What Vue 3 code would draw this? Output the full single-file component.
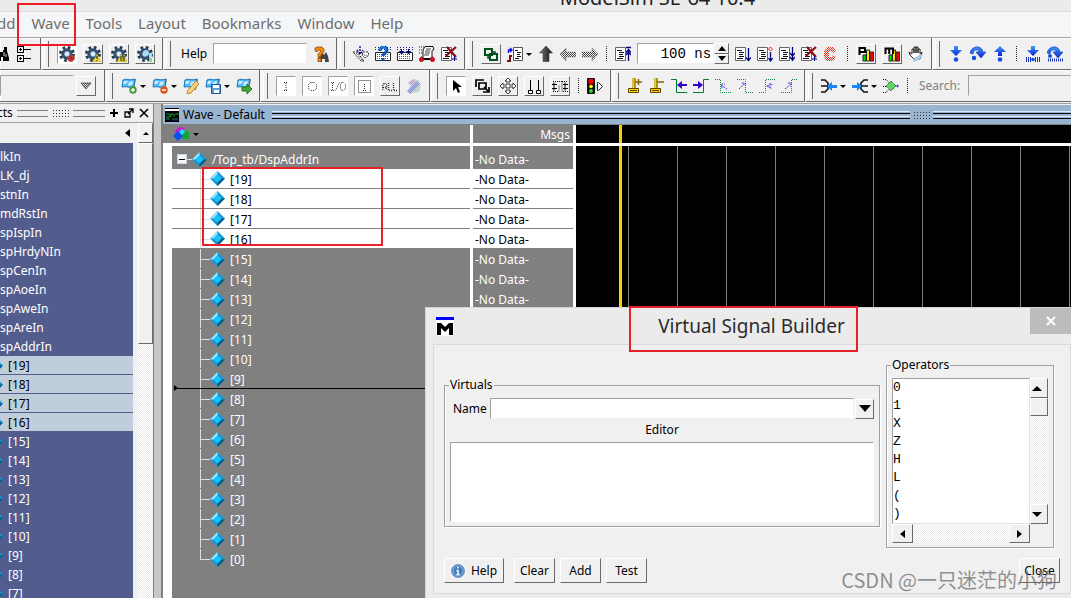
<script setup>
const menus = ['dd', 'Wave', 'Tools', 'Layout', 'Bookmarks', 'Window', 'Help']

const fileTools = [
  { icon: 'binoc', label: 'Find' },
  { icon: 'expand', label: 'Expand' },
]
const simTools = [
  { icon: 'gear-red', label: 'Break', kind: 'down' },
  { icon: 'gear-warn', label: 'Warnings', kind: 'up' },
  { icon: 'gear-warn2', label: 'All warnings', kind: 'up' },
  { icon: 'gear-green', label: 'Status', kind: 'up' },
]
const compileTools = [
  { icon: 'compile', label: 'Compile' },
  { icon: 'compile-q', label: 'Compile out of date' },
  { icon: 'compile-all', label: 'Compile all' },
  { icon: 'simulate', label: 'Simulate' },
  { icon: 'doc-break', label: 'End simulation' },
]
const envTools = [
  { icon: 'env', label: 'Environment', kind: 'up' },
  { icon: 'doc-env', label: 'Context', drop: true },
  { icon: 'up', label: 'Up' },
  { icon: 'left', label: 'Back' },
  { icon: 'right', label: 'Forward' },
  { sep: true },
  { icon: 'restart', label: 'Restart' },
]
const runTools = [
  { icon: 'run', label: 'Run' },
  { icon: 'run-step', label: 'Continue run' },
  { icon: 'run-all', label: 'Run all' },
  { icon: 'doc-break', label: 'Break' },
  { icon: 'stop', label: 'Stop' },
  { sep: true },
  { icon: 'prof', label: 'Performance profile', kind: 'up' },
  { icon: 'mem', label: 'Memory profile', kind: 'up' },
  { icon: 'hand', label: 'Edit breakpoints' },
]
const stepTools = [
  { icon: 'step-in', label: 'Step into' },
  { icon: 'step-over', label: 'Step over' },
  { icon: 'step-out', label: 'Step out' },
  { sep: true },
  { icon: 'step-in2', label: 'Step into instance' },
  { icon: 'step-over2', label: 'Step over instance' },
]
const bookTools = [
  { icon: 'bm-add', label: 'Add bookmark', drop: true },
  { icon: 'bm-del', label: 'Delete bookmark', drop: true },
  { icon: 'bm-edit', label: 'Manage bookmarks' },
  { icon: 'bm-save', label: 'Save bookmarks', drop: true },
  { icon: 'bm-go', label: 'Jump to bookmark' },
]
const filterTools = [
  { icon: 'f-in', label: 'Inputs', kind: 'down' },
  { icon: 'f-out', label: 'Outputs', kind: 'down' },
  { icon: 'f-io', label: 'Inouts', kind: 'down' },
  { icon: 'f-int', label: 'Internals', kind: 'down' },
  { icon: 'f-all', label: 'All', kind: 'up' },
  { icon: 'brush', label: 'Color' },
]
const modeTools = [
  { icon: 'cursor', label: 'Select mode', kind: 'down' },
  { icon: 'zoom-mode', label: 'Zoom mode', kind: 'up' },
  { icon: 'pan', label: 'Pan mode', kind: 'up' },
  { icon: 'two-cursor', label: 'Two cursor mode', kind: 'up' },
  { icon: 'edit-mode', label: 'Edit mode', kind: 'up' },
  { sep: true },
  { icon: 'light', label: 'Stop drawing' },
]
const cursorTools = [
  { icon: 'c-add', label: 'Insert cursor' },
  { icon: 'c-del', label: 'Delete cursor' },
  { icon: 't-prev', label: 'Previous transition' },
  { icon: 't-next', label: 'Next transition' },
  { icon: 'fall-prev', label: 'Previous falling edge' },
  { icon: 'fall-next', label: 'Next falling edge' },
  { icon: 'rise-prev', label: 'Previous rising edge' },
  { icon: 'rise-next', label: 'Next rising edge' },
]
const traceTools = [
  { icon: 'drivers', label: 'Expand to drivers', drop: true },
  { icon: 'readers', label: 'Expand to readers', drop: true },
  { icon: 'both', label: 'Expand both' },
  { sep: true },
]

const objects = ['lkIn', 'LK_dj', 'stnIn', 'mdRstIn', 'spIspIn', 'spHrdyNIn', 'spCenIn', 'spAoeIn', 'spAweIn', 'spAreIn', 'spAddrIn']
const bits = Array.from({ length: 20 }, (_, i) => 19 - i)
const operators = ['0', '1', 'X', 'Z', 'H', 'L', '(', ')']

const bottomRow = [
  { name: 'bookmarks', items: bookTools },
  { name: 'filters', items: filterTools },
  { name: 'modes', items: modeTools },
  { name: 'cursors', items: cursorTools },
]
</script>

<template>
  <svg class="defs" aria-hidden="true">
    <symbol id="binoc" viewBox="0 0 16 16"><path d="M2 1h3v3h2v2h3V4h1V1h3v4l2 7v3h-6v-4H8v4H2v-5z" fill="#000" /><path d="M11 6v4M13 8v3M4 6v5" stroke="#ddd" /></symbol>
    <symbol id="expand" viewBox="0 0 16 16"><g fill="none" stroke="#000" shape-rendering="crispEdges"><path d="M2.500 .5h6v6h-6zM2.500 9.500h6v6h-6zM4 3.500h3M5.500 2v3M4 12.500h3M5.500 11v3M9 3.500h7M9 12.500h7" /></g></symbol>
    <symbol id="gear" viewBox="0 0 16 16"><circle cx="8" cy="8" r="6.500" fill="none" stroke="#263a50" stroke-width="3" stroke-dasharray="2.600 2.500" /><circle cx="8" cy="8" r="4.200" fill="#a9d0e8" stroke="#34506f" stroke-width="3" /><circle cx="8" cy="8" r="2" fill="#e2edf5" /></symbol>
    <symbol id="gear-red" viewBox="0 0 16 16"><use href="#gear" /><path d="M9 10l2-1 2 1 2-2 1 5-3 3-4-1z" fill="#c33a3a" /><path d="M10 12h5M12 10v4" stroke="#8f2a2a" /></symbol>
    <symbol id="gear-warn" viewBox="0 0 16 16"><use href="#gear" /><path d="M12 8l4 8H8z" fill="#f2e23a" stroke="#a79a22" stroke-width=".6" /><path d="M12 10v3M12 14v1" stroke="#000" /></symbol>
    <symbol id="gear-warn2" viewBox="0 0 16 16"><use href="#gear" /><path d="M10 8l3 8H6zM13 8l3 8h-5z" fill="#f2e23a" stroke="#a79a22" stroke-width=".6" /><path d="M10 10v5M13 10v5" stroke="#111" /></symbol>
    <symbol id="gear-green" viewBox="0 0 16 16"><use href="#gear" /><circle cx="9" cy="7" r="3" fill="#a7d8f5" /><path d="M12 7h3v4h-3z" fill="#9bdcf0" /><path d="M12 12h3v4h-3z" fill="#7fe08a" /></symbol>
    <symbol id="find-q" viewBox="0 0 16 16"><path d="M6 8l3-2 2 3 2-3 2 4 1 6h-4v-3H9v3H5z" fill="#444" /><path d="M2 5V2l2-1h5l2 2v3L8 9v2H5V8l3-3-2-1-2 2zM5 12h3v4H5z" fill="#f28b12" stroke="#7b4505" stroke-width=".7" /></symbol>
    <symbol id="compile" viewBox="0 0 16 16"><path d="M0 6h4l7 9H8zM10 6h5l1 3-4 3-3-3z" fill="#fff" stroke="#222" stroke-dasharray="2 1" /><path d="M3 7l7 8M9 8l5 2" stroke="#222" stroke-dasharray="1 1" /><path d="M7 0v8M4 4l3 4 3-4" stroke="#000080" stroke-width="1.300" fill="none" stroke-dasharray="2 1" /></symbol>
    <symbol id="stack" viewBox="0 0 16 16"><path d="M.5 6.500h15v8H.5z" fill="#fff" stroke="#222" /><path d="M2 8.500h12M2 10.500h12M2 12.500h12" stroke="#555" stroke-dasharray="1 1" /><path d="M0 1.500h16M0 3.500h16" stroke="#1b1b8b" stroke-dasharray="1 2" /></symbol>
    <symbol id="compile-q" viewBox="0 0 16 16"><use href="#stack" /><path d="M5 5c0-5 7-5 7-1 0 3-4 3-4 6M8 12v2.500" fill="none" stroke="#0756bd" stroke-width="3" /><path d="M5 4c0-4 6-4 6-1" fill="none" stroke="#33a7ff" /></symbol>
    <symbol id="compile-all" viewBox="0 0 16 16"><use href="#stack" /><path d="M4.500 3v3M11.500 3v3M2.500 5.500h4l-2 2.500zM9.500 5.500h4l-2 2.500z" stroke="#000080" fill="#000080" /></symbol>
    <symbol id="simulate" viewBox="0 0 16 16"><path d="M6 .5h8l1 3-2 1v7l-2 1H4V4z" fill="#fff" stroke="#111" /><path d="M7 3h5M6 5h5M6 7h5M5 9h5" stroke="#444" /><path d="M0 1h5M0 4h4M0 7h3" stroke="#1b1b8b" stroke-dasharray="1 1" /><path d="M3 13.500h10" stroke="#000" /><path d="M2.500 10.500l3 3-3 3-3-3zM13.500 10.500l3 3-3 3-3-3z" fill="#d3152d" stroke="#600" stroke-width=".5" /></symbol>
    <symbol id="page" viewBox="0 0 16 16"><path d="M.5 1.500h10v13H.5z" fill="#fff" stroke="#666" /><path d="M2 4.500h5M4 6.500h5M4 8.500h4M4 10.500h5M2 12.500h6" stroke="#111" /></symbol>
    <symbol id="doc-break" viewBox="0 0 16 16"><use href="#page" /><path d="M6 1l9 10M15 1L5 10" stroke="#8b0d14" stroke-width="2.200" /><path d="M13.500 10v5M11 13h5" stroke="#000080" /></symbol>
    <symbol id="env" viewBox="0 0 16 16"><path d="M2 3h7v6H2zM7 8h7v6H7z" fill="none" stroke="#00511c" stroke-width="2" /><path d="M9 6h3v2M5 9v3h2" fill="none" stroke="#00511c" stroke-width="1.500" /></symbol>
    <symbol id="doc-env" viewBox="0 0 16 16"><path d="M6.500 1.500h9v13h-9z" fill="#fff" stroke="#555" /><path d="M8 4.500h3M10 6.500h4M10 8.500h3M10 10.500h4M8 12.500h4" stroke="#111" /><path d="M1.500 7V4h3M3 2l2 2-2 2" fill="none" stroke="#0000ee" stroke-width="1.300" /><path d="M0 15h3v-5h2" fill="none" stroke="#7d1010" stroke-width="2" /></symbol>
    <linearGradient id="dark" x1="0" x2="1"><stop offset="0" stop-color="#777" /><stop offset="1" stop-color="#111" /></linearGradient>
    <symbol id="up" viewBox="0 0 16 16"><path d="M8 0l6.500 7H11v8.500H5V7H1.500z" fill="url(#dark)" stroke="#333" stroke-width=".5" /></symbol>
    <pattern id="dither" width="2" height="2" patternUnits="userSpaceOnUse"><path d="M0 0h1v1H0zM1 1h1v1H1z" fill="#444" /></pattern>
    <symbol id="left" viewBox="0 0 16 16"><path d="M0 8l6-6v4h10v5H6v4z" fill="url(#dither)" stroke="#666" stroke-width=".8" stroke-dasharray="1 1" /></symbol>
    <symbol id="right" viewBox="0 0 16 16"><path d="M16 8l-6-6v4H0v5h10v4z" fill="url(#dither)" stroke="#666" stroke-width=".8" stroke-dasharray="1 1" /></symbol>
    <symbol id="restart" viewBox="0 0 16 16"><use href="#page" /><path d="M13.500 3v12M11 1.500h5M11 6.500l2.500-3 2.500 3M11 9l2.500-3L16 9" stroke="#000080" stroke-width="1.300" fill="none" /></symbol>
    <symbol id="run" viewBox="0 0 16 16"><use href="#page" /><path d="M13.500 2v12M11 11.500l2.500 3 2.500-3" stroke="#000080" stroke-width="1.300" fill="none" /></symbol>
    <symbol id="run-step" viewBox="0 0 16 16"><use href="#page" /><path d="M13.500 6v9M11.500 12l2 3 2-3" stroke="#000080" stroke-width="1.300" fill="none" /><path d="M13.500 1l2 2-2 2-2-2z" fill="#fff" stroke="#e02020" /></symbol>
    <symbol id="run-all" viewBox="0 0 16 16"><use href="#page" /><path d="M13.500 1v14M11 7l2.500 3L16 7M11 11l2.500 3 2.500-3" stroke="#000080" stroke-width="1.300" fill="none" /></symbol>
    <pattern id="red-dither" width="2" height="2" patternUnits="userSpaceOnUse"><path d="M0 0h1v1H0zM1 1h1v1H1z" fill="#e0301a" /></pattern>
    <symbol id="stop" viewBox="0 0 16 16"><path d="M4 1h6l3 4-3 2-1-2H6v6h3l1-2 3 2-3 4H4l-3-4V5z" fill="url(#red-dither)" /></symbol>
    <symbol id="bars" viewBox="0 0 16 16"><path d="M5 9h3v6H5z" fill="#00e400" stroke="#222" /><path d="M8.500 4h3v11h-3z" fill="#ffe600" stroke="#222" /><path d="M12 6h3.500v9H12z" fill="#f00" stroke="#222" /></symbol>
    <symbol id="prof" viewBox="0 0 16 16"><use href="#bars" /><path d="M1.500 9V2H7v4H2" fill="none" stroke="#000" stroke-width="2" /></symbol>
    <symbol id="mem" viewBox="0 0 16 16"><use href="#bars" /><path d="M1.500 8V2.500H9V8M5.200 3v5" fill="none" stroke="#000" stroke-width="2" /></symbol>
    <symbol id="hand" viewBox="0 0 16 16"><path d="M6 13L2 9 1 6l3 2V3h2v4-6h2v6-6h2v6-4h2v5l2-2-2 7z" fill="#fff" stroke="#111" stroke-width=".9" /><path d="M5 13l6-4 4-1-3 5-6 3z" fill="#a3c7e9" /></symbol>
    <linearGradient id="sky" x1="0" x2="0" y1="0" y2="1"><stop offset="0" stop-color="#3d9cff" /><stop offset="1" stop-color="#0b24c8" /></linearGradient>
    <symbol id="step-in" viewBox="0 0 16 16"><path d="M6 0h4v4h4L8 10 2 4h4z" fill="url(#sky)" /><circle cx="8" cy="13.500" r="2.300" fill="#1450e0" /></symbol>
    <symbol id="step-over" viewBox="0 0 16 16"><path d="M0 7C2-1 12-1 13 6h3l-5 6-5-6h3C8 2 3 4 3 8z" fill="url(#sky)" stroke="#0a37b3" stroke-width=".6" /><circle cx="4" cy="12" r="2.200" fill="#1450e0" /></symbol>
    <symbol id="step-out" viewBox="0 0 16 16"><path d="M8 0l6 6h-4v4H6V6H2z" fill="url(#sky)" /><circle cx="8" cy="13.500" r="2.300" fill="#1450e0" /></symbol>
    <symbol id="step-in2" viewBox="0 0 16 16"><path d="M6 0h4v4h4L8 10 2 4h4z" fill="url(#sky)" /><path d="M1.500 11v5M3.500 11v5M5.500 11v5M10.500 11v5M12.500 11v5M14.500 11v5" stroke="#1a35c0" /><circle cx="8" cy="13.500" r="1.800" fill="#1450e0" /></symbol>
    <symbol id="step-over2" viewBox="0 0 16 16"><path d="M0 7C2-1 12-1 13 6h3l-5 6-5-6h3C8 2 3 4 3 8z" fill="url(#sky)" stroke="#0a37b3" stroke-width=".6" /><circle cx="3" cy="10" r="2" fill="#1450e0" /><path d="M1 14h15" stroke="#1a35c0" stroke-width="3" stroke-dasharray="1 1" /></symbol>
    <symbol id="flag" viewBox="0 0 16 16"><path d="M13 1h2l-2 11h-2z" fill="#b87a27" /><path d="M2 2c4-2 6 1 12-1l-1 8c-5 1-7-1-12 0z" fill="#55b9f5" stroke="#1677c5" /><path d="M3 3h4L5 6H2zM8 4l4-1-1 4-4 1z" fill="#c6edff" /></symbol>
    <symbol id="bm-add" viewBox="0 0 16 16"><use href="#flag" /><circle cx="12" cy="12" r="3.700" fill="#3f9a35" /><path d="M12 10v4M10 12h4" stroke="#fff" stroke-width="1.400" /></symbol>
    <symbol id="bm-del" viewBox="0 0 16 16"><use href="#flag" /><circle cx="12" cy="12" r="3.700" fill="#e35214" /><path d="M10 12h4" stroke="#fff" stroke-width="1.600" /></symbol>
    <symbol id="bm-edit" viewBox="0 0 16 16"><use href="#flag" /><path d="M13 3l3 3-8 9-4 1 1-4z" fill="#f6d383" stroke="#c9821c" /></symbol>
    <symbol id="bm-save" viewBox="0 0 16 16"><use href="#flag" /><path d="M6.500 6.500h9v9h-9z" fill="#5d9be0" stroke="#23569c" /><path d="M8 7h6v3H8zM9 12h5v3H9z" fill="#fff" /></symbol>
    <symbol id="bm-go" viewBox="0 0 16 16"><use href="#flag" /><path d="M6 9h5V6l5 5-5 5v-3H6z" fill="#49a63f" stroke="#26771f" /></symbol>
    <symbol id="f-in" viewBox="0 0 16 16"><path d="M6 4.500h3M8 5v7M6 12.500h4" stroke="#333" stroke-dasharray="1 1" /></symbol>
    <symbol id="f-out" viewBox="0 0 16 16"><path d="M6.500 4.500h4l2 2v4l-2 2h-4l-2-2v-4z" fill="none" stroke="#333" stroke-dasharray="1 1" /></symbol>
    <symbol id="f-io" viewBox="0 0 16 16"><path d="M1 4.500h3M2.500 5v7M1 12.500h3M5.500 12.500l4-8M11.500 4.500h2l2 2v4l-2 2h-2l-1-2v-4z" fill="none" stroke="#333" stroke-dasharray="1 1" /></symbol>
    <symbol id="f-int" viewBox="0 0 16 16"><path d="M2.500 2.500h12v12h-12zM8.500 6v6M7 12.500h4" fill="none" stroke="#222" stroke-dasharray="1 1" /></symbol>
    <symbol id="f-all" viewBox="0 0 16 16"><path d="M.5 12V7l2-2 2 2v5M1 9.500h4M6.500 5v7.500h4M11.500 5v7.500h4" fill="none" stroke="#333" stroke-dasharray="1 1" stroke-width="1.400" /></symbol>
    <symbol id="brush" viewBox="0 0 16 16"><path d="M2 5l4-4 5 1 4 5-2 7-4 1z" fill="#d5eadf" /><path d="M2 5l5-4 4 4-5 2z" fill="#dec4e8" /><path d="M1 13L11 3l3 3L4 16z" fill="#a4b5f3" /><path d="M2 5l5-4 6 1 2 5-2 7-9 2-3-3 4-6z" fill="url(#dither)" opacity=".25" /></symbol>
    <symbol id="cursor" viewBox="0 0 16 16"><path d="M5 2v11l3-3 2 5 2-1-2-5h4z" fill="#000" /></symbol>
    <symbol id="zoom-mode" viewBox="0 0 16 16"><path d="M2 9V2h8M5 5h7v6H5zM9 14h6V9M10 9l5 5" fill="none" stroke="#000" stroke-width="1.700" /></symbol>
    <symbol id="pan" viewBox="0 0 16 16"><path d="M8 0l3 3H9v4h4V5l3 3-3 3V9H9v4h2l-3 3-3-3h2V9H3v2L0 8l3-3v2h4V3H5z" fill="#fff" stroke="#222" stroke-width=".9" /></symbol>
    <symbol id="two-cursor" viewBox="0 0 16 16"><path d="M4.500 2v10M12.500 2v10" stroke="#000" /><path d="M2.500 12.500h4v3h-4zM10.500 12.500h4v3h-4z" fill="#fff" stroke="#000" /></symbol>
    <symbol id="edit-mode" viewBox="0 0 16 16"><path d="M1 3.500h9v10h6M10 3.500h6M1 13.500h6V7" fill="none" stroke="#111" stroke-dasharray="1 1" /><path d="M0 6.500h5M0 10.500h5M2 4.500v4M2 8.500v4M11 6.500h5M11 10.500h5M13 4.500v4M13 8.500v4" stroke="#000" /></symbol>
    <symbol id="light" viewBox="0 0 16 16"><rect width="8" height="16" rx="1" fill="#111" /><circle cx="4" cy="3.500" r="2.700" fill="#f00" /><circle cx="4" cy="8.500" r="1.800" fill="#ff0" /><circle cx="4" cy="13" r="1.900" fill="#29dd29" /><path d="M10.500 4.500v8h1l4-4-4-4z" fill="#fff" stroke="#222" /><path d="M9 7v4" stroke="#68cfe6" /></symbol>
    <symbol id="c-base" viewBox="0 0 16 16"><path d="M7 0v11" stroke="#5b4500" stroke-width="3" /><path d="M6.500 0v11" stroke="#ffd400" stroke-width="2" /><path d="M1.500 10.500h10v4h-10z" fill="#ffd400" stroke="#5b4500" /><path d="M3 12.500h7" stroke="#5b4500" /></symbol>
    <symbol id="c-add" viewBox="0 0 16 16"><use href="#c-base" /><path d="M8 4h7M11.500 1v6" stroke="#80640a" stroke-width="1.500" /></symbol>
    <symbol id="c-del" viewBox="0 0 16 16"><use href="#c-base" /><path d="M8 4h7" stroke="#80640a" stroke-width="1.500" /></symbol>
    <symbol id="t-prev" viewBox="0 0 16 16"><path d="M0 1.500h5.500v13H16" fill="none" stroke="#007a28" /><path d="M6 7l5-4v3h5v2h-5v3z" fill="#3300cc" /></symbol>
    <symbol id="t-next" viewBox="0 0 16 16"><path d="M0 14.500h10.500v-13H16" fill="none" stroke="#007a28" /><path d="M10 7L5 3v3H0v2h5v3z" fill="#3300cc" /></symbol>
    <symbol id="fall-prev" viewBox="0 0 16 16"><path d="M0 1.500h5.500v13H16" fill="none" stroke="#118841" stroke-dasharray="1 1" /><path d="M6 7l6 4M7 10V6h3" fill="none" stroke="#5330db" stroke-dasharray="2 1" /></symbol>
    <symbol id="fall-next" viewBox="0 0 16 16"><path d="M0 1.500h8.500v13H16" fill="none" stroke="#118841" stroke-dasharray="1 1" /><path d="M2 11l5-5M5 5h3v3" fill="none" stroke="#5330db" stroke-dasharray="2 1" /></symbol>
    <symbol id="rise-prev" viewBox="0 0 16 16"><path d="M0 14.500h6.500v-13H16" fill="none" stroke="#118841" stroke-dasharray="1 1" /><path d="M8 8l6-2M8 8l5 3M11 5v5" fill="none" stroke="#5330db" stroke-dasharray="2 1" /></symbol>
    <symbol id="rise-next" viewBox="0 0 16 16"><path d="M0 14.500h10.500v-13H16" fill="none" stroke="#118841" stroke-dasharray="1 1" /><path d="M4 11l6-5M7 5h3v4" fill="none" stroke="#5330db" stroke-dasharray="2 1" /></symbol>
    <symbol id="drivers" viewBox="0 0 16 16"><path d="M0 2h4l3 3v6l-3 3H0M0 8h7" fill="none" stroke="#111" stroke-width="1.600" /><path d="M6 8l5-4v3h5v3h-5v3z" fill="#1686ff" /></symbol>
    <symbol id="readers" viewBox="0 0 16 16"><path d="M16 2h-4L9 5v6l3 3h4M9 8h7" fill="none" stroke="#111" stroke-width="1.600" /><path d="M10 8L5 4v3H0v3h5v3z" fill="#1686ff" /></symbol>
    <symbol id="both" viewBox="0 0 16 16"><path d="M0 1.500h3l3 3M0 14.500h3l3-3M0 8.500h5" fill="none" stroke="#111" stroke-dasharray="1 1" /><path d="M8 3l5 5-5 5-5-5z" fill="#5ad95a" stroke="#222" stroke-dasharray="1 1" /><path d="M13 8l1.500-1.500L16 8l-1.500 1.500z" fill="#3344dd" /></symbol>
    <symbol id="diamond" viewBox="0 0 15 15"><path d="M7.500 0L15 7.500 7.500 15 0 7.500z" fill="#1798d4" /><path d="M7.500 0v3.500l-4 4H0z" fill="#9be4ff" /><path d="M7.500 15v-3.500l4-4H15z" fill="#005a84" /><path d="M7.500 3.500l4 4-4 4-4-4z" fill="#14c4fb" /></symbol>
  </svg>

  <div class="app">
    <header class="titlebar"><span>ModelSim SE-64 10.4</span></header>
    <nav class="menubar">
      <button v-for="m in menus" :key="m" type="button" :class="{ marked: m === 'Wave' }">{{ m }}</button>
    </nav>

    <div class="toolbars">
      <div class="toolrow">
        <div class="group clipped-a">
          <button v-for="t in fileTools" :key="t.icon" type="button" class="tool" :aria-label="t.label"><svg><use :href="'#' + t.icon" /></svg></button>
        </div>
        <div class="group grip">
          <button v-for="t in simTools" :key="t.icon" type="button" class="tool" :class="t.kind" :aria-label="t.label"><svg><use :href="'#' + t.icon" /></svg></button>
        </div>
        <div class="group grip">
          <label for="help-field" class="help-label">Help</label>
          <input id="help-field" class="field help-field" type="text" />
          <button type="button" class="tool" aria-label="Search help"><svg><use href="#find-q" /></svg></button>
        </div>
        <div class="group grip">
          <button v-for="t in compileTools" :key="t.icon" type="button" class="tool" :aria-label="t.label"><svg><use :href="'#' + t.icon" /></svg></button>
        </div>
        <div class="group grip">
          <template v-for="(t, i) in envTools" :key="i">
            <i v-if="t.sep" class="sep"></i>
            <button v-else type="button" class="tool" :class="[t.kind, { drop: t.drop }]" :aria-label="t.label"><svg><use :href="'#' + t.icon" /></svg></button>
          </template>
          <div class="spin">
            <input class="field time" type="text" value="100 ns" aria-label="Run length" />
            <div class="spin-buttons">
              <button type="button" aria-label="Increase"><i class="tri up-tri"></i></button>
              <button type="button" aria-label="Decrease"><i class="tri down-tri"></i></button>
            </div>
          </div>
          <template v-for="(t, i) in runTools" :key="i">
            <i v-if="t.sep" class="sep"></i>
            <button v-else type="button" class="tool" :class="t.kind" :aria-label="t.label"><svg><use :href="'#' + t.icon" /></svg></button>
          </template>
        </div>
        <div class="group grip last">
          <template v-for="(t, i) in stepTools" :key="i">
            <i v-if="t.sep" class="sep"></i>
            <button v-else type="button" class="tool" :aria-label="t.label"><svg><use :href="'#' + t.icon" /></svg></button>
          </template>
        </div>
      </div>

      <div class="toolrow">
        <div class="group clipped-b">
          <input class="field plain" type="text" aria-label="Layout" />
          <button type="button" class="tool up" aria-label="Open list"><svg viewBox="0 0 16 16"><path d="M3 5h10l-5 6z" fill="url(#dither)" stroke="#333" stroke-width=".7" /></svg></button>
        </div>
        <div v-for="g in bottomRow" :key="g.name" class="group grip">
          <template v-for="(t, i) in g.items" :key="i">
            <i v-if="t.sep" class="sep"></i>
            <button v-else type="button" class="tool" :class="[t.kind, { drop: t.drop }]" :aria-label="t.label"><svg><use :href="'#' + t.icon" /></svg></button>
          </template>
        </div>
        <div class="group grip last">
          <template v-for="(t, i) in traceTools" :key="i">
            <i v-if="t.sep" class="sep"></i>
            <button v-else type="button" class="tool" :class="{ drop: t.drop }" :aria-label="t.label"><svg><use :href="'#' + t.icon" /></svg></button>
          </template>
          <label for="search-field" class="search-label">Search:</label>
          <input id="search-field" class="field plain" type="text" />
        </div>
      </div>
    </div>

    <main class="workspace">
      <section class="objects">
        <div class="pane-title">
          <span>cts</span><i class="rails"></i><i class="dots"></i><i class="rails"></i>
          <button type="button" aria-label="Add"><svg viewBox="0 0 10 10"><path d="M5 1v8M1 5h8" stroke="#000" stroke-width="2" /></svg></button>
          <button type="button" aria-label="Undock"><svg viewBox="0 0 10 10"><path d="M1 4h5v5H1zM4 6l5-5M5 1h4v4" fill="none" stroke="#000" stroke-width="1.300" /></svg></button>
          <button type="button" aria-label="Close"><svg viewBox="0 0 10 10"><path d="M1 1l8 8M9 1L1 9" stroke="#000" stroke-width="1.600" /></svg></button>
        </div>
        <div class="objects-body">
          <div class="objects-main">
            <div class="column-head"><i class="tri left-tri"></i></div>
            <ul class="object-list">
              <li v-for="o in objects" :key="o">{{ o }}</li>
              <li v-for="b in bits" :key="b" class="bit" :class="{ selected: b > 15 }"><svg><use href="#diamond" /></svg>[{{ b }}]</li>
            </ul>
          </div>
          <div class="vscroll">
            <button type="button" class="arrow" aria-label="Scroll up"><i class="tri up-tri"></i></button>
            <div class="thumb"></div>
          </div>
        </div>
      </section>

      <section class="wave">
        <div class="wave-title">
          <svg class="wave-logo" viewBox="0 0 14 14"><path d="M0 0h14v14H0z" fill="#000" /><path d="M0 1h14v2H0z" fill="#fff" /><path d="M1 6h4v3H1M6 9V6h3v3M10 6h4M1 11h4M7 11h6" fill="none" stroke="#149b3c" /><path d="M8 12h5" stroke="#2222cc" /></svg>
          <span>Wave - Default</span><i class="rails blue"></i><i class="dots"></i><i class="rails blue tail"></i>
        </div>
        <div class="wave-grid">
          <div class="names-head head">
            <svg viewBox="0 0 16 14"><path d="M6 0l6 1-5 6-6-2z" fill="#c11ed0" /><path d="M9 4h7v8H9z" fill="#16a33c" /><path d="M5 4l5 5-5 5-5-5z" fill="#0a4ef0" /><path d="M9 2l3 3-3 3-3-3z" fill="#19e4ff" /></svg>
            <i class="tri down-tri"></i>
          </div>
          <div class="msgs-head head">Msgs</div>
          <div class="time-head"></div>

          <ul class="names">
            <li class="root"><i class="box"></i><svg><use href="#diamond" /></svg><span>/Top_tb/DspAddrIn</span></li>
            <li v-for="b in bits" :key="b" :class="{ selected: b > 15, end: b === 0 }"><svg><use href="#diamond" /></svg><span>[{{ b }}]</span></li>
          </ul>
          <ul class="msgs">
            <li>-No Data-</li>
            <li v-for="b in bits" :key="b" :class="{ selected: b > 15 }">-No Data-</li>
          </ul>
          <div class="plot"></div>
        </div>
        <div class="insert-mark"></div>
        <div class="note bits-note"></div>
      </section>
    </main>

    <section class="dialog" role="dialog" aria-labelledby="dialog-title">
      <header>
        <svg class="logo" viewBox="0 0 18 19"><path d="M0 2h18v17H0z" fill="#fff" /><path d="M0 0h18v3H0z" fill="#00f" /><path d="M1 6h4l4 4 4-4h4v12h-4v-7l-4 4-4-4v7H1z" fill="#000" /></svg>
        <h1 id="dialog-title">Virtual Signal Builder</h1>
        <button type="button" class="close" aria-label="Close window"><svg viewBox="0 0 10 10"><path d="M1 1l8 8M9 1L1 9" stroke="#fff" stroke-width="2" /></svg></button>
      </header>
      <div class="dialog-body">
        <div class="panes">
          <fieldset class="virtuals">
            <legend>Virtuals</legend>
            <div class="name-row">
              <label for="virtual-name">Name</label>
              <input id="virtual-name" class="field" type="text" />
              <button type="button" aria-label="Show names"><i class="tri down-tri wide"></i></button>
            </div>
            <label for="virtual-editor" class="editor-label">Editor</label>
            <textarea id="virtual-editor"></textarea>
          </fieldset>
          <fieldset class="operators">
            <legend>Operators</legend>
            <div class="op-grid">
              <ul role="listbox" aria-label="Operators">
                <li v-for="o in operators" :key="o" role="option">{{ o }}</li>
              </ul>
              <div class="op-v">
                <button type="button" aria-label="Scroll up"><i class="tri up-tri big"></i></button>
                <div class="op-thumb"></div>
                <button type="button" class="end" aria-label="Scroll down"><i class="tri down-tri big"></i></button>
              </div>
              <div class="op-h">
                <button type="button" aria-label="Scroll left"><i class="tri left-tri"></i></button>
                <button type="button" aria-label="Scroll right"><i class="tri right-tri"></i></button>
              </div>
            </div>
          </fieldset>
        </div>
        <div class="actions">
          <button type="button" class="help"><svg viewBox="0 0 14 14"><circle cx="7" cy="7" r="6.500" fill="#3f7dbd" stroke="#7d9fc4" /><circle cx="7" cy="7" r="5" fill="none" stroke="#a9cbee" stroke-width=".7" /><path d="M7 3v1.600M7 6v5M5.500 6.500H7M5.500 10.500h3" stroke="#fff" stroke-width="1.500" /></svg>Help</button>
          <button type="button">Clear</button>
          <button type="button">Add</button>
          <button type="button">Test</button>
          <button type="button" class="far">Close</button>
        </div>
      </div>
      <div class="note title-note"></div>
    </section>
    <div class="watermark">CSDN @一只迷茫的小狗</div>
  </div>
</template>

<style>
html,
body {
  overflow: hidden;
}
</style>

<style scoped>
* {
  box-sizing: border-box;
}
.defs {
  position: absolute;
  width: 0;
  height: 0;
}
.app {
  position: relative;
  display: flex;
  flex-direction: column;
  height: 100vh;
  overflow: hidden;
  background: #f0f0f0;
  color: #000;
  font: 12px/16px "Noto Sans", "Open Sans", sans-serif;
}
button {
  padding: 0;
  border: 0;
  background: none;
  color: inherit;
  font: inherit;
}
ul {
  margin: 0;
  padding: 0;
  list-style: none;
}
.titlebar {
  flex: none;
  display: flex;
  align-items: flex-end;
  justify-content: center;
  height: 12px;
  padding-left: 244px;
  overflow: hidden;
  border-bottom: 1px solid #d9dadb;
  background: #ebebeb;
  color: #222;
  font-size: 20px;
  line-height: 26px;
}
.titlebar span {
  white-space: nowrap;
}
.menubar {
  flex: none;
  display: flex;
  gap: 16px;
  height: 25px;
  margin-left: -3px;
  padding-bottom: 4px;
  background: #f5f6f7;
  color: #6d6d6d;
  font: 15px/20px "Noto Sans", sans-serif;
}
.menubar button {
  position: relative;
}
.menubar .marked::after {
  content: "";
  position: absolute;
  z-index: 5;
  inset: -9px -6px -13px -14px;
  border: 2px solid #ee1c25;
}
.toolbars {
  flex: none;
  border-top: 1px solid #a0a0a0;
  border-bottom: 1px solid #a0a0a0;
  padding-bottom: 1px;
}
.toolrow {
  display: flex;
  gap: 1px;
  height: 32px;
}
.group {
  position: relative;
  flex: none;
  display: flex;
  align-items: center;
  gap: 6px;
  padding: 0 7px 0 15px;
  border: solid #696969;
  border-width: 0 1px 1px 0;
  box-shadow: inset 1px 1px #fff;
}
.grip::before {
  content: "";
  position: absolute;
  top: 3px;
  bottom: 2px;
  left: 2px;
  width: 3px;
  border: solid #fff;
  border-width: 0 0 0 1px;
  border-right: 1px solid #696969;
}
.last {
  flex: 1 0 0;
  min-width: 0;
  border-right: 0;
  padding-right: 0;
}
.clipped-a {
  justify-content: flex-end;
  width: 41px;
  padding-right: 9px;
  overflow: hidden;
}
.clipped-b {
  gap: 2px;
  width: 105px;
  padding: 0 8px 0 0;
}
.tool {
  position: relative;
  flex: none;
  width: 16px;
  height: 20px;
  display: flex;
  align-items: center;
}
.tool svg {
  flex: none;
  width: 16px;
  height: 16px;
}
.tool.up,
.tool.down {
  justify-content: center;
  width: 20px;
  border: 1px solid;
  border-color: #fff #696969 #696969 #fff;
}
.tool.down {
  border-color: #a0a0a0 #fff #fff #a0a0a0;
  background: #fff;
}
.tool.drop {
  width: 25px;
}
.tool.drop::after {
  content: "";
  position: absolute;
  right: 0;
  top: 9px;
  border: solid transparent;
  border-width: 3px 3px 0;
  border-top-color: #000;
}
.sep {
  width: 5px;
  height: 16px;
  background: repeating-linear-gradient(#222 0 1px, transparent 1px 2px) 2px 0 / 1px 100% no-repeat;
}
.field {
  min-width: 0;
  height: 21px;
  margin: 0;
  padding: 0 2px;
  border: 1px solid;
  border-color: #a0a0a0 #f0f0f0 #f0f0f0 #a0a0a0;
  border-radius: 0;
  background: #fff;
  font: inherit;
}
.field.plain {
  flex: 1;
  background: #f0f0f0;
}
.help-label {
  padding-left: 2px;
}
.help-field {
  width: 94px;
}
.spin {
  display: flex;
  align-items: center;
}
.time {
  width: 77px;
  text-align: right;
  font: 14px "Liberation Mono", monospace;
}
.spin-buttons {
  display: grid;
  grid-template-rows: 1fr 1fr;
  width: 15px;
  height: 21px;
}
.spin-buttons .up-tri {
  border-width: 0 4px 5px;
}
.spin-buttons .down-tri {
  border-width: 5px 4px 0;
}
.spin-buttons button,
.arrow,
.name-row button,
.op-grid button,
.thumb,
.op-thumb {
  display: flex;
  align-items: center;
  justify-content: center;
  border: 1px solid;
  border-color: #fff #696969 #696969 #fff;
  background: #f0f0f0;
}
.search-label {
  padding: 0 2px 0 3px;
  color: #808080;
}
.tri {
  border: 3px solid transparent;
}
.up-tri {
  border-top: 0;
  border-bottom-color: #000;
}
.down-tri {
  border-bottom: 0;
  border-top-color: #000;
}
.left-tri {
  border-width: 4px 5px 4px 0;
  border-right-color: #000;
}
.right-tri {
  border-width: 4px 0 4px 5px;
  border-left-color: #000;
}
.big {
  border-width: 5px;
}
.big.up-tri {
  border-top: 0;
}
.big.down-tri {
  border-bottom: 0;
}
.wide {
  border-width: 7px 6px 0;
}
.workspace {
  flex: 1;
  min-height: 0;
  display: flex;
}
.objects {
  flex: none;
  display: flex;
  flex-direction: column;
  width: 154px;
  border-right: 1px solid #808080;
}
.pane-title {
  flex: none;
  display: flex;
  align-items: center;
  gap: 4px;
  height: 19px;
  padding-right: 4px;
  border-bottom: 1px solid #a0a0a0;
}
.pane-title span {
  margin-left: -3px;
}
.pane-title button {
  flex: none;
  display: flex;
  width: 10px;
  height: 11px;
}
.pane-title button svg {
  width: 10px;
  height: 10px;
}
.rails {
  flex: 1;
  height: 7px;
  border: solid #808080;
  border-width: 1px 0;
}
.dots {
  flex: none;
  width: 17px;
  height: 8px;
  background: radial-gradient(circle, #333 0 1px, transparent 1px) 0 0 / 3px 3px;
}
.pane-title button + button {
  margin-left: 1px;
}
.objects-body {
  flex: 1;
  min-height: 0;
  display: flex;
  justify-content: space-between;
}
.objects-main {
  width: 133px;
  display: flex;
  flex-direction: column;
}
.column-head {
  flex: none;
  display: flex;
  align-items: center;
  justify-content: flex-end;
  height: 20px;
  padding-right: 3px;
}
.object-list {
  flex: 1;
  min-height: 0;
  overflow: hidden;
  padding-top: 4px;
  background: #525c8d;
  color: #fff;
}
.object-list li {
  height: 19px;
  line-height: 19px;
}
.object-list .bit {
  display: flex;
  align-items: center;
  gap: 5px;
  border-bottom: 1px solid #525c8d;
}
.object-list svg {
  flex: none;
  width: 15px;
  height: 15px;
  margin-left: -12px;
}
.object-list .selected {
  background: #c0cddb;
  color: #000;
}
.vscroll {
  width: 15px;
  background: repeating-conic-gradient(#fff 0 25%, #ececec 0 50%) 0 0 / 2px 2px;
}
.vscroll .arrow {
  width: 15px;
  height: 20px;
}
.thumb {
  height: 201px;
}
.wave {
  position: relative;
  flex: 1;
  min-width: 0;
  display: flex;
  flex-direction: column;
  margin-left: 7px;
  border-left: 2px solid #808080;
  box-shadow: -7px 0 #c8c8c8;
}
.wave-title {
  flex: none;
  display: flex;
  align-items: center;
  gap: 3px;
  height: 21px;
  padding-left: 2px;
  border-top: 1px solid #f0f0f0;
  border-bottom: 1px solid #808080;
  background: #99b4d1;
}
.wave-title span {
  white-space: nowrap;
  padding: 0 4px 0 1px;
}
.wave-logo {
  width: 14px;
  height: 14px;
}
.rails.blue {
  height: 8px;
  border: 0;
  background: linear-gradient(#d7ecfa 0 1px, #99b4d1 1px 2px, #000 2px 3px, #99b4d1 3px 5px, #d7ecfa 5px 6px, #99b4d1 6px 7px, #000 7px);
}
.rails.tail {
  flex: 0 0 138px;
}
.wave-grid {
  flex: 1;
  min-height: 0;
  display: grid;
  grid-template: 21px minmax(0, 1fr) / 310px 103px minmax(0, 1fr);
  color: #fff;
}
.wave-grid > * {
  min-height: 0;
  overflow: hidden;
}
.head {
  display: flex;
  align-items: center;
  border-right: 3px solid #fff;
  border-bottom: 3px solid #fff;
  background: #808080;
}
.names-head {
  gap: 4px;
  padding-left: 10px;
}
.names-head svg {
  width: 16px;
  height: 14px;
}
.msgs-head {
  justify-content: flex-end;
  padding: 2px 3px 0 0;
}
.time-head,
.plot {
  background: linear-gradient(#ffd000 0 0) 43px 0 / 3px 100% no-repeat, #000;
}
.time-head {
  border-bottom: 3px solid #fff;
}
.plot {
  background:
    linear-gradient(#ffd000 0 0) 43px 0 / 3px 100% no-repeat,
    linear-gradient(#000 0 0) 0 0 / 43px 100% no-repeat,
    repeating-linear-gradient(90deg, #808080 0 1px, #000 1px 49px) 3px 0;
}
.names,
.msgs {
  padding-top: 3px;
  border-right: 3px solid #fff;
  background: #808080;
}
.names {
  border-left: 9px solid #fff;
}
.names li,
.msgs li {
  height: 20px;
  line-height: 22px;
}
.names li {
  position: relative;
  display: flex;
  align-items: center;
  gap: 5px;
  padding-left: 38px;
}
.names span {
  padding-top: 2px;
}
.names svg {
  width: 15px;
  height: 15px;
}
.names li::before,
.names li::after {
  content: "";
  position: absolute;
  left: 28px;
  background: #ddd;
}
.names li::before {
  top: 0;
  height: 19px;
  width: 1px;
}
.names li::after {
  top: 10px;
  width: 10px;
  height: 1px;
}
.names li.end::before {
  height: 10px;
}
.names .root {
  padding-left: 5px;
}
.names .root::before {
  display: none;
}
.names .root::after {
  left: 15px;
  width: 5px;
}
.box {
  width: 10px;
  height: 10px;
  border: 1px solid #ccd4de;
  background: linear-gradient(#000 0 0) center / 6px 1px no-repeat, #f4f7fa;
}
.msgs li {
  padding-left: 2px;
}
.names .selected,
.msgs .selected {
  border-bottom: 1px solid #808080;
  background: #fff;
  color: #000;
}
.insert-mark {
  position: absolute;
  left: 11px;
  right: 0;
  top: 284px;
  height: 1px;
  background: #000;
}
.insert-mark::before {
  content: "";
  position: absolute;
  left: 0;
  top: -3px;
  border: solid transparent;
  border-width: 3px 0 3px 4px;
  border-left-color: #000;
}
.note {
  position: absolute;
  border: 2px solid #e8202a;
  pointer-events: none;
}
.bits-note {
  left: 39px;
  top: 63px;
  width: 181px;
  height: 79px;
}
.dialog {
  position: absolute;
  left: 425px;
  right: 0;
  top: 307px;
  bottom: 0;
  display: flex;
  flex-direction: column;
  padding: 0 0 4px 7px;
  border: solid #d5d5d5;
  border-width: 1px 0 0 1px;
  background: #ebebeb;
}
.dialog header {
  flex: none;
  display: flex;
  align-items: flex-start;
  height: 36px;
}
.logo {
  width: 18px;
  height: 19px;
  margin: 9px 0 0 3px;
}
.dialog h1 {
  flex: 1;
  margin: 0 0 0 19px;
  color: #2b2b2b;
  font: 19px/37px "Noto Sans", sans-serif;
  text-align: center;
}
.close {
  display: flex;
  align-items: center;
  justify-content: center;
  width: 41px;
  height: 26px;
  background: #bcbcbc;
}
.close svg {
  width: 10px;
  height: 10px;
}
.dialog-body {
  flex: 1;
  display: flex;
  flex-direction: column;
  justify-content: space-between;
  padding: 12px 10px 10px;
  border: 1px solid #dadada;
  background: #f0f0f0;
}
.panes {
  display: flex;
  align-items: flex-start;
  gap: 6px;
  padding-right: 6px;
}
fieldset {
  min-width: 0;
  margin: 0;
  padding: 0 5px 4px;
  border: 1px solid #a0a0a0;
  box-shadow: inset 1px 0 #fff, 1px 1px #fff;
}
legend {
  padding: 0 1px;
  line-height: 16px;
}
.virtuals {
  flex: 1;
  margin-top: 20px;
}
.virtuals legend,
.operators legend {
  margin-left: -1px;
}
.name-row {
  display: flex;
  align-items: center;
  gap: 1px;
  padding-top: 5px;
}
.name-row label {
  padding: 0 2px 0 3px;
}
.name-row .field {
  flex: 1;
}
.name-row button {
  width: 19px;
  height: 20px;
}
.editor-label {
  display: block;
  padding: 3px 0 4px;
  text-align: center;
}
textarea {
  display: block;
  width: 100%;
  height: 80px;
  margin: 0;
  padding: 2px;
  border: 1px solid;
  border-color: #a0a0a0 #fff #fff #a0a0a0;
  border-radius: 0;
  background: #fff;
  resize: none;
}
.operators {
  flex: 0 0 168px;
}
.op-grid {
  display: grid;
  grid-template: 146px 19px / minmax(0, 1fr) 18px;
  padding-top: 5px;
}
.op-grid ul {
  border: 1px solid;
  border-color: #a0a0a0 #e3e3e3 #e3e3e3 #a0a0a0;
  background: #fff;
  font: 13px/18px "Liberation Mono", monospace;
}
.op-v,
.op-h {
  display: flex;
  background: repeating-conic-gradient(#fff 0 25%, #ececec 0 50%) 0 0 / 2px 2px;
}
.op-v {
  flex-direction: column;
}
.op-v button {
  height: 20px;
  padding-right: 4px;
}
.op-thumb {
  height: 18px;
}
.op-v .end {
  margin-top: auto;
}
.op-h {
  justify-content: space-between;
}
.op-h button {
  width: 21px;
}
.actions {
  display: flex;
  gap: 5px;
}
.actions button {
  width: 41px;
  height: 25px;
  border: 1px solid;
  border-color: #fff #696969 #696969 #fff;
}
.actions .help {
  display: flex;
  align-items: center;
  justify-content: center;
  gap: 6px;
  width: 60px;
  margin-right: 5px;
}
.actions svg {
  width: 14px;
  height: 14px;
}
.actions .far {
  margin-left: auto;
}
.title-note {
  left: 203px;
  top: -2px;
  width: 229px;
  height: 46px;
}
.watermark {
  position: absolute;
  right: 14px;
  bottom: 4px;
  color: rgba(110, 110, 110, 0.75);
  font: 20px/28px "Noto Sans CJK SC", "Noto Sans", sans-serif;
}
</style>
